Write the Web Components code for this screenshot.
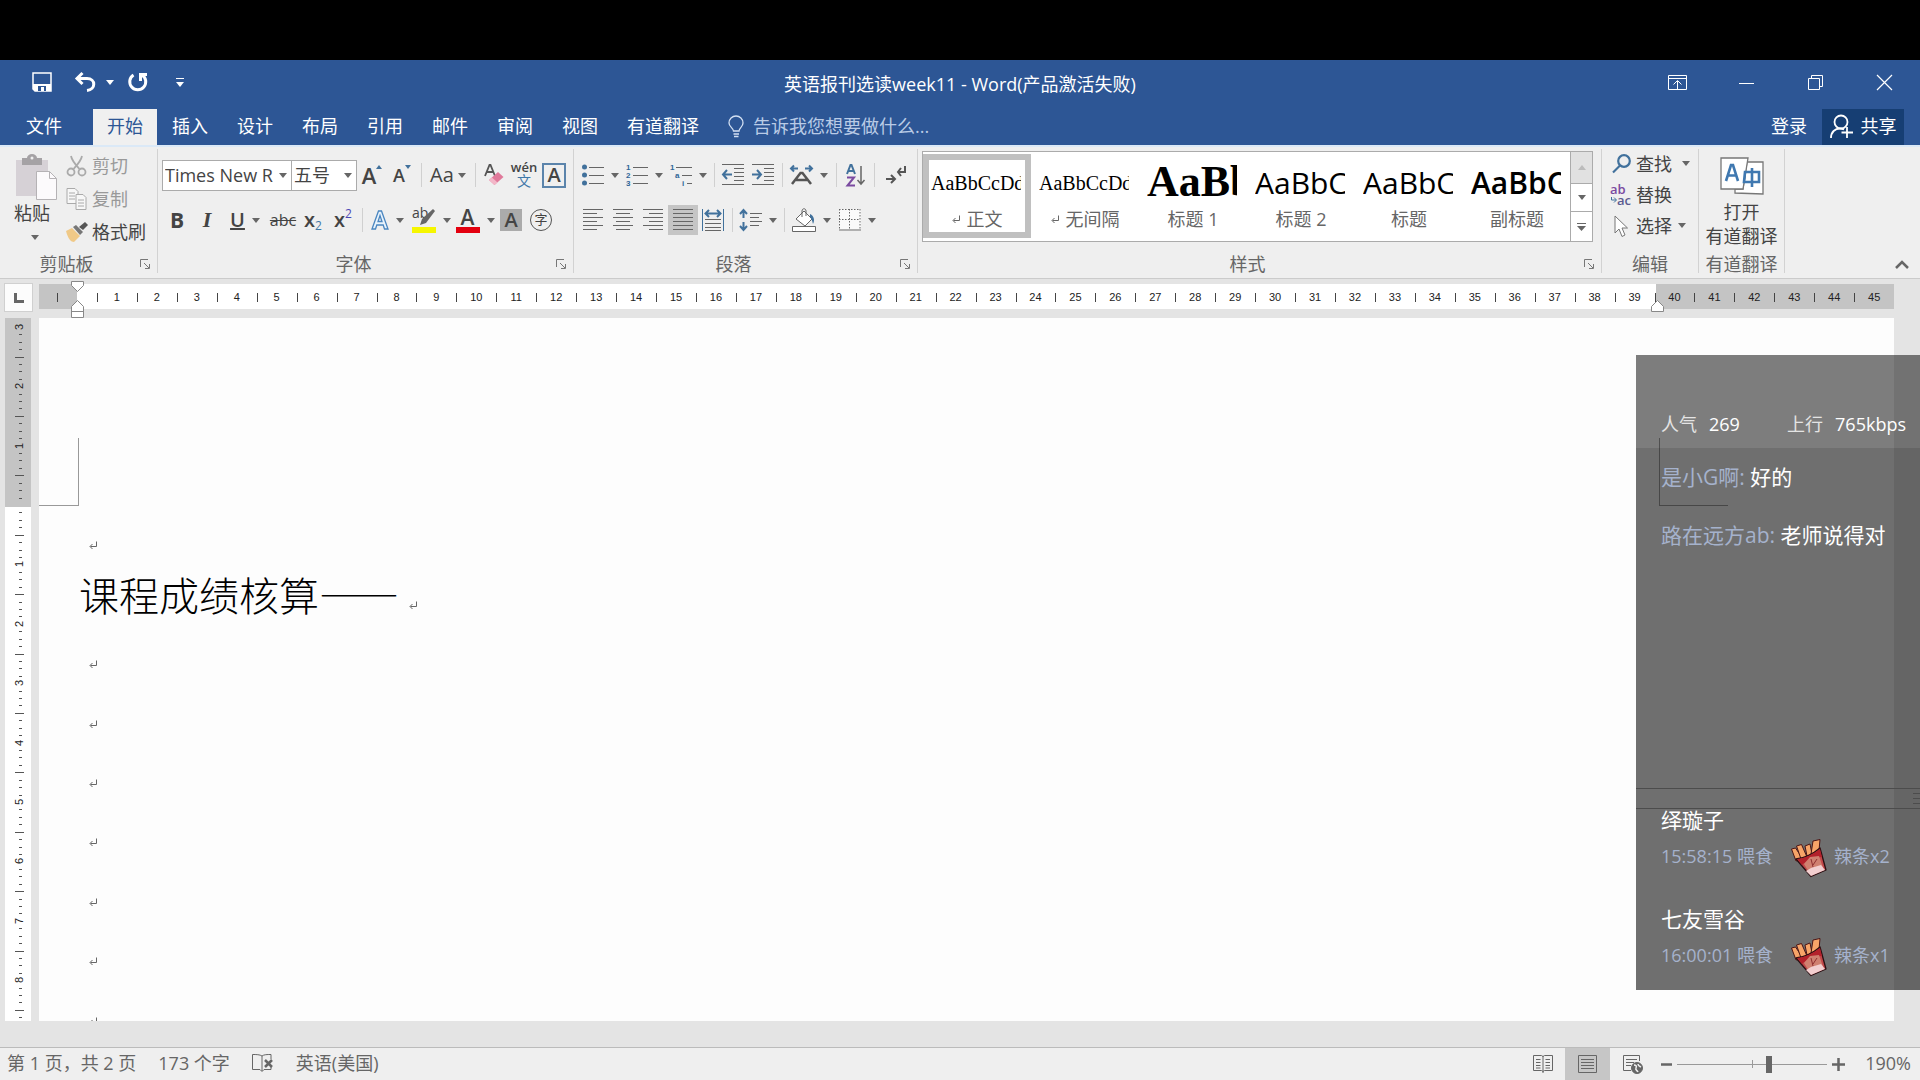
<!DOCTYPE html>
<html lang="zh-CN">
<head>
<meta charset="utf-8">
<title>英语报刊选读week11 - Word</title>
<style>
html,body{margin:0;height:100%;background:#000}
body{font:18px/24px "Open Sans","Noto Sans CJK SC",sans-serif;color:#444}
</style>
</head>
<body>
<word-app></word-app>
<script>
const BASE = `
*,:host{box-sizing:border-box}
:host{display:block}
:host([hidden]){display:none}
button{font:inherit;color:inherit;background:none;border:0;padding:0;margin:0;display:flex;align-items:center;justify-content:center;white-space:nowrap}
a{color:inherit;text-decoration:none}
svg{display:block;flex:none;overflow:visible}
`;
function define(name, css, html, setup){
  const tpl = document.createElement('template');
  tpl.innerHTML = `<style>${BASE}${css}</style>${html}`;
  customElements.define(name, class extends HTMLElement{
    constructor(){
      super();
      this.attachShadow({mode:'open'}).append(tpl.content.cloneNode(true));
    }
    connectedCallback(){ if(setup) setup(this, this.shadowRoot); }
  });
}
const RET = '<svg width="9" height="9" viewBox="0 0 9 9" fill="none" stroke="#666"><path d="M7.500 0.500v5h-6M3.500 3l-2.500 2.500L3.500 8"/></svg>';

/* ---------- small parts ---------- */
define('caret-mark', `:host{width:8px;height:5px;flex:none;color:#666}`,
  `<svg width="8" height="5"><path d="M0 0h8L4 5z" fill="currentColor"/></svg>`);

define('tool-button', `
:host{width:30px;height:30px;flex:none}
:host([size="m"]){width:42px}
:host([size="l"]){width:44px}
:host([size="xl"]){width:46px}
button{width:100%;height:100%}
:host([drop]) button{gap:7px}
:host([on]) button{background:#c5c5c5}
caret-mark{display:none}
:host([drop]) caret-mark{display:block}
`, `<button type="button"><slot></slot><caret-mark></caret-mark></button>`, (h, r) => {
  r.querySelector('button').setAttribute('aria-label', h.getAttribute('label') || '');
});

define('tool-sep', `:host{width:8px;height:24px;flex:none;display:flex;justify-content:center}i{width:1px;background:#d0d0d0}`, `<i></i>`);

define('ribbon-group', `
:host{display:flex;flex-direction:column;flex:none;border-right:1px solid #d2d2d2;color:#444}
.body{flex:1;min-height:0}
footer{display:flex;height:19px;line-height:21px;color:#666}
.label{flex:1;text-align:center}
button{width:24px;display:none}
:host([launcher]) button{display:flex}
`, `<div class="body"><slot></slot></div><footer><span class="label"></span><button type="button" aria-label="更多"><svg width="10" height="10" fill="none" stroke="#777"><path d="M.5 8V.5H8M4 4l5 5M9.500 5v4.500H5"/></svg></button></footer>`,
(h, r) => { r.querySelector('.label').textContent = h.getAttribute('label'); });

/* ---------- title bar ---------- */
define('title-bar', `
:host{display:grid;grid-template-columns:1fr auto 1fr;height:49px;color:#fff;align-items:center}
.quick{display:flex;padding-left:26px;margin-top:-5px}
.quick button{width:32px;height:32px}
.quick .undo{width:56px;gap:10px;margin-left:8px}
.quick .more{margin-left:10px}
caret-mark{color:#fff}
h1{font:inherit;margin:0;padding-bottom:2px}
.win{display:flex;justify-content:flex-end;margin-top:-4px;padding-right:1px}
.win button{width:69px;height:36px}
`, `
<div class="quick">
<button type="button" aria-label="保存"><svg width="20" height="20" viewBox="0 0 20 20"><path d="M1 1h18v18H3l-2-2z" fill="none" stroke="#fff" stroke-width="1.500"/><path d="M1 12h18v7H3l-2-2z" fill="#fff"/><path d="M6 14h8v5h-2v-4h-3v4H6z" fill="#2d5695"/></svg></button>
<button type="button" class="undo" aria-label="撤消"><svg width="22" height="20" viewBox="0 0 22 20" fill="none" stroke="#fff" stroke-width="3"><path d="M8.500 1L3 6.500 8.500 12M3.500 6.500H13c9 0 9 11 0 12"/></svg><caret-mark></caret-mark></button>
<button type="button" aria-label="重复"><svg width="20" height="20" viewBox="0 0 20 20" fill="none" stroke="#fff" stroke-width="3"><path d="M5.500 3A8 8 0 1 0 14 3M12.500 9V2.500H19"/></svg></button>
<button type="button" class="more" aria-label="自定义"><svg width="8" height="9"><path d="M0 .5h8" stroke="#fff"/><path d="M0 4h8L4 9z" fill="#fff"/></svg></button>
</div>
<h1>英语报刊选读week11 - Word(产品激活失败)</h1>
<div class="win">
<button type="button" aria-label="功能区显示选项"><svg width="19" height="16" fill="none" stroke="#fff"><path d="M.5.500h18v14H.500zM.500 3.500h18M9.500 14V6M5.500 9.500l4-4 4 4"/></svg></button>
<button type="button" aria-label="最小化"><svg width="15" height="2"><path d="M0 1.500h15" stroke="#fff"/></svg></button>
<button type="button" aria-label="还原"><svg width="15" height="15" fill="none" stroke="#fff"><path d="M.5 3.500h11v11H.500zM3.500 3V.500h11v11H12"/></svg></button>
<button type="button" aria-label="关闭"><svg width="15" height="15" fill="none" stroke="#fff" stroke-width="1.200"><path d="M0 0l15 15M15 0L0 15"/></svg></button>
</div>`);

/* ---------- tabs ---------- */
define('ribbon-tabs', `
:host{display:flex;height:36px;color:#fff;padding-left:12px}
nav{display:flex;gap:1px}
nav button{padding:0 14px 2px;height:36px}
.file{margin-right:16px}
.on{background:#f0f0f0;color:#2d5695}
label{display:flex;align-items:center;gap:8px;margin-left:15px;color:#b9cbe6}
input{font:inherit;color:inherit;background:none;border:0;padding:0 0 2px;width:190px;outline:0}
input::placeholder{color:#b9cbe6;opacity:1}
.right{margin-left:auto;display:flex;gap:15px;padding-right:16px}
.right button{padding-bottom:2px}
.share{background:#163e73;width:82px;gap:8px;height:36px}
`, `
<nav></nav>
<label><svg width="17" height="22" viewBox="0 0 17 22" fill="none" stroke="#d3e0f3" stroke-width="1.300"><path d="M5.500 15c0-3-4.500-4-4.500-8a7 7 0 0 1 14 0c0 4-4 5-4 8zM5.500 18h5.500M6 20.500h4.500"/></svg><input type="text" aria-label="告诉我" placeholder="告诉我您想要做什么..."></label>
<div class="right"><button type="button">登录</button><button type="button" class="share"><svg width="23" height="25" viewBox="0 0 23 25" fill="none" stroke="#fff" stroke-width="1.800"><circle cx="11" cy="8" r="6.500"/><path d="M1 24c0-6 4-9.500 9-9.500 2 0 3 .5 4 1M17 13v11M11.500 18.500H23"/></svg>共享</button></div>`,
(h, r) => {
  r.querySelector('nav').innerHTML = ['文件','开始','插入','设计','布局','引用','邮件','审阅','视图','有道翻译']
    .map((t, i) => `<button type="button" class="${i === 0 ? 'file' : i === 1 ? 'on' : ''}">${t}</button>`).join('');
});

/* ---------- ribbon groups ---------- */
define('clipboard-tools', `
:host{display:flex;padding:0 0 0 14px}
.paste{flex-direction:column;width:45px;align-items:flex-start;justify-content:flex-start;padding-top:5px}
.paste span{margin-top:1px}
.paste caret-mark{margin:10px 0 0 17px}
.list{margin-left:6px}
.list button{height:33px;gap:4px;justify-content:flex-start}
.list svg{width:23px}
.off{color:#999}
`, `
<button type="button" class="paste"><svg width="43" height="46" viewBox="0 0 43 46"><path d="M2 6h32v36H2z" fill="#d6d1d6"/><path d="M8 4h5a5 4 0 0 1 10 0h5v7H8z" fill="#a5a2a5"/><circle cx="18" cy="4" r="1.500" fill="#efefef"/><path d="M22.500 17.500h13l7 7v21h-20z" fill="#fcfafc" stroke="#b5b2b5"/><path d="M35.500 17.500v7h7" fill="none" stroke="#b5b2b5"/></svg><span>粘贴</span><caret-mark></caret-mark></button>
<div class="list">
<button type="button" class="off"><svg width="20" height="22" viewBox="0 0 20 22" fill="none" stroke="#aaa" stroke-width="1.800"><path d="M4.500 1c1 5 4 8 8.500 13M15.500 1c-1 5-4 8-8.500 13"/><circle cx="4.500" cy="17" r="3.500"/><circle cx="15.500" cy="17" r="3.500"/></svg>剪切</button>
<button type="button" class="off"><svg width="22" height="22" viewBox="0 0 22 22" fill="#f7f7f7" stroke="#aaa"><path d="M1.500.500h8l3 3v12h-11zM3.500 5h6M3.500 8h6M3.500 11h6"/><path d="M10.500 6.500h7l3 3v12h-10zM12.500 12h6M12.500 15h6M12.500 18h6"/></svg>复制</button>
<button type="button"><svg width="23" height="20" viewBox="0 0 23 20"><path d="M1 9l6-3 8 8-6 6c-3 0-6-3-8-11z" fill="#f0c987"/><path d="M8 5l3-2 7 7-3 3z" fill="#777"/><path d="M14 5l6-5 3 3-5 5z" fill="#555"/></svg>格式刷</button>
</div>`);

define('font-tools', `
:host{padding:11px 0 0 4px;display:flex;flex-direction:column;gap:15px}
.row{display:flex;align-items:center;height:30px}
.combo{display:flex;align-items:center;position:relative;height:31px;background:#fff;border:1px solid #ababab;width:130px;margin-right:-1px}
.combo.s{width:66px;margin-right:0}
select{font:inherit;color:#444;appearance:none;border:0;background:none;padding:0 0 0 2px;margin:0;width:100%;height:28px;outline:0}
.combo caret-mark{position:absolute;right:4px;top:12px;width:8px}
b,i,u,s,span{line-height:30px}
.a{font-size:22px;font-weight:600;line-height:30px}
.sub{font-size:12px;line-height:14px;color:#3f78a8;align-self:flex-end;font-weight:400}
.sup{align-self:flex-start;color:#4b47b5}
.x{display:flex;font-weight:600;font-size:20px;line-height:26px}
.bar{display:flex;flex-direction:column;width:24px;align-items:center}
.bar>em{height:6px;width:24px;background:#e3000f}
.bar>span{font-size:21px;line-height:20px;font-weight:600}
.wen{display:flex;flex-direction:column;align-items:center;font-size:13px;font-weight:600}
.wen span{line-height:11px}
.wen span+span{color:#3f78a8;line-height:15px;font-size:14px;font-weight:400}
.box{border:2px solid #5b84ab;width:24px;height:25px;line-height:20px;font-size:20px;font-weight:600;text-align:center}
.shade{background:#ababab;width:22px;height:22px;line-height:22px;font-size:20px;font-weight:600;text-align:center}
.ring{border:1px solid #555;border-radius:50%;width:22px;height:22px;font-size:13px;line-height:19px;text-align:center}
`, `
<div class="row">
<label class="combo"><select aria-label="字体"><option>Times New R</option></select><caret-mark></caret-mark></label>
<label class="combo s"><select aria-label="字号"><option>五号</option></select><caret-mark></caret-mark></label>
<tool-button label="增大字号"><span class="a">A</span><svg width="6" height="20"><path d="M0 4h6L3 0z" fill="#41719c"/></svg></tool-button>
<tool-button label="减小字号"><span style="font-weight:600">A</span><svg width="6" height="20"><path d="M0 0h6L3 4z" fill="#41719c"/></svg></tool-button>
<tool-sep></tool-sep>
<tool-button size="xl" drop label="更改大小写"><span style="font-size:20px;margin-right:-3px">Aa</span></tool-button>
<tool-sep></tool-sep>
<tool-button label="清除格式"><svg width="20" height="22" viewBox="0 0 20 22"><path d="M1 12L5.500 1h1L11 12M2.500 8h7" fill="none" stroke="#555" stroke-width="1.800"/><path d="M5 16l9-8 5.500 5-9 8z" fill="#e0799a"/><path d="M5 16l3-2.500 5.500 5-3 2.500z" fill="#f3b7c8"/></svg></tool-button>
<tool-button label="拼音指南"><div class="wen"><span>wén</span><span>文</span></div></tool-button>
<tool-button label="字符边框"><div class="box">A</div></tool-button>
</div>
<div class="row">
<tool-button label="加粗"><b style="font-size:21px">B</b></tool-button>
<tool-button label="倾斜"><i style="font:italic bold 22px/30px 'Liberation Serif',serif">I</i></tool-button>
<tool-button size="xl" drop label="下划线"><u style="font-size:20px;font-weight:600">U</u></tool-button>
<tool-button label="删除线"><s style="font-size:16px">abc</s></tool-button>
<tool-button label="下标"><div class="x">x<span class="sub">2</span></div></tool-button>
<tool-button label="上标"><div class="x">x<span class="sub sup">2</span></div></tool-button>
<tool-sep></tool-sep>
<tool-button size="m" drop label="文本效果"><svg width="18" height="20" viewBox="0 0 18 20"><path d="M1 19L7.500 1h3L17 19h-3.500l-1.300-4H5.800l-1.300 4zM7 11.500h4L9 5.500z" fill="#e8f3fc" stroke="#4a86c0" stroke-width="1.300"/></svg></tool-button>
<tool-button size="xl" drop label="突出显示"><div class="bar"><svg width="24" height="20" viewBox="0 0 24 20"><text x="0" y="11" font-size="14" fill="#444">ab</text><path d="M10 12L21 2l2 2-9 12-6 2z" fill="#666"/></svg><em style="background:#f6f600"></em></div></tool-button>
<tool-button size="m" drop label="字体颜色"><div class="bar"><span>A</span><em></em></div></tool-button>
<tool-button label="字符底纹"><div class="shade">A</div></tool-button>
<tool-button label="带圈字符"><div class="ring">字</div></tool-button>
</div>`);

define('paragraph-tools', `
:host{padding:11px 0 0 4px;display:flex;flex-direction:column;gap:15px}
.row{display:flex;align-items:center;height:30px}
svg{fill:none;stroke:#666}
.b{fill:#41719c;stroke:none}.bs{stroke:#41719c;stroke-width:2}
text{stroke:none;font:bold 8px "Liberation Sans",sans-serif;fill:#2f6597}
`, `
<div class="row">
<tool-button size="l" drop label="项目符号"><svg width="22" height="22"><g class="b"><circle cx="2.500" cy="3" r="2.500"/><circle cx="2.500" cy="11" r="2.500"/><circle cx="2.500" cy="19" r="2.500"/></g><path d="M7 3.500h15M7 11.500h15M7 19.500h15"/></svg></tool-button>
<tool-button size="l" drop label="编号"><svg width="22" height="22"><text x="0" y="6">1</text><text x="0" y="14">2</text><text x="0" y="22">3</text><path d="M7 3.500h15M7 11.500h15M7 19.500h15"/></svg></tool-button>
<tool-button size="l" drop label="多级列表"><svg width="22" height="22"><text x="0" y="6">1</text><text x="5" y="14">a</text><text x="12" y="22">i</text><path d="M6 3.500h16M12 11.500h10M17 19.500h5"/></svg></tool-button>
<tool-sep></tool-sep>
<tool-button label="减少缩进"><svg width="22" height="22"><path d="M0 .500h22M12 4.500h10M12 8.500h10M12 12.500h10M12 16.500h10M0 20.500h22"/><path class="bs" d="M10 10.500H1M5 6l-4 4.500L5 15"/></svg></tool-button>
<tool-button label="增加缩进"><svg width="22" height="22"><path d="M0 .500h22M12 4.500h10M12 8.500h10M12 12.500h10M12 16.500h10M0 20.500h22"/><path class="bs" d="M0 10.500h9M5 6l4 4.500L5 15"/></svg></tool-button>
<tool-sep></tool-sep>
<tool-button size="xl" drop label="中文版式"><svg width="23" height="20"><path class="bs" d="M8 3.500H1M4 .500l-3 3 3 3M15 3.500h7M19 .500l3 3-3 3"/><path d="M2 19L10.500 8h2L21 19M6 15h11" stroke-width="2.500" stroke="#555"/></svg></tool-button>
<tool-sep></tool-sep>
<tool-button label="排序"><svg width="19" height="23"><path d="M1 10L4.500 1h1L9 10M2.500 7h5" stroke="#41719c" stroke-width="2"/><path d="M1 13.500h7L1.500 21.500H9" stroke="#7a4aa0" stroke-width="2"/><path d="M15 2v18M11.500 16l3.500 4 3.500-4" stroke-width="1.500"/></svg></tool-button>
<tool-sep></tool-sep>
<tool-button label="编辑标记"><svg width="15" height="20" stroke-width="2"><path d="M19 1v6h-7M15 3l-3 4 3 4M0 14h9M5 10l4 4-4 4" stroke="#555"/></svg></tool-button>
</div>
<div class="row">
<tool-button label="左对齐"><svg width="20" height="22"><path d="M0 .500h20M0 4.500h14M0 8.500h20M0 12.500h14M0 16.500h20M0 20.500h14"/></svg></tool-button>
<tool-button label="居中"><svg width="20" height="22"><path d="M0 .500h20M3 4.500h14M0 8.500h20M3 12.500h14M0 16.500h20M3 20.500h14"/></svg></tool-button>
<tool-button label="右对齐"><svg width="20" height="22"><path d="M0 .500h20M6 4.500h14M0 8.500h20M6 12.500h14M0 16.500h20M6 20.500h14"/></svg></tool-button>
<tool-button on label="两端对齐"><svg width="20" height="22"><path d="M0 .500h20M0 4.500h20M0 8.500h20M0 12.500h20M0 16.500h20M0 20.500h20"/></svg></tool-button>
<tool-button label="分散对齐"><svg width="22" height="22"><path d="M.500 0v22M21.500 0v22" stroke="#41719c"/><path class="bs" d="M4 4.500h14M7 1L3.500 4.500 7 8M15 1l3.500 3.500L15 8"/><path d="M3 10.500h16M3 14.500h16M3 18.500h16M3 21.500h16"/></svg></tool-button>
<tool-sep></tool-sep>
<tool-button size="l" drop label="行距"><svg width="23" height="22"><path class="bs" d="M4.500 1v8M1 5l3.500-4L8 5M4.500 13v8M1 17l3.500 4L8 17"/><path d="M11 4.500h12M11 8.500h9M11 12.500h12M11 16.500h9"/></svg></tool-button>
<tool-sep></tool-sep>
<tool-button size="xl" drop label="底纹"><svg width="24" height="24"><path d="M4 11l8-8 8 8-7 7z" fill="#fff"/><path d="M10 9V3c0-3 4-3 4 0v5"/><path d="M18 6c4 2 5 6 3 10-1-4-2-6-3-7z" class="b"/><path d="M.500 18.500h23v5H.500z" fill="#fff"/></svg></tool-button>
<tool-button size="xl" drop label="边框"><svg width="22" height="22"><path d="M0 0h22v22H0z" fill="#fafafa" stroke="none"/><path d="M.500 0v21M21 0v21M0 .500h21M0 10.500h21M10.500 0v21" stroke-dasharray="1.500 1.500"/><path d="M0 21h22"/></svg></tool-button>
</div>`);

define('style-card', `
:host{width:108px;flex:none;height:84px;margin-top:2px;padding:0 2px;border:6px solid transparent;display:flex;flex-direction:column}
:host([on]){border-color:#c0c0c0}
.sample{height:48px;overflow:hidden;white-space:nowrap;color:#000;font:20px/46px "Liberation Serif",serif;width:90px}
.name{display:flex;justify-content:center;align-items:center;gap:6px;line-height:22px;color:#666;white-space:nowrap}
.name svg{display:none}
:host([mark]) .name svg{display:block}
:host([kind="h1"]) .sample{font:bold 44px/43px "Liberation Serif",serif}
:host([kind="h2"]) .sample{font:400 30px/46px "Open Sans",sans-serif}
:host([kind="sub"]) .sample{font:600 30px/46px "Open Sans",sans-serif}
`, `<div class="sample"><slot></slot></div><div class="name">${RET}<span></span></div>`,
(h, r) => { r.querySelector('span').textContent = h.getAttribute('label'); });

define('style-gallery', `
:host{padding:2px 8px 0 4px}
.g{display:flex;height:91px;border:1px solid #ababab;background:#fff}
.cards{display:flex;flex:1;overflow:hidden}
.scroll{width:22px;border-left:1px solid #ababab;display:grid;grid-template-rows:31px 28px 1fr}
.scroll button+button{border-top:1px solid #ababab}
.scroll button:first-child{background:#e1e1e1}
`, `<div class="g"><div class="cards">
<style-card on mark label="正文">AaBbCcDd</style-card>
<style-card mark label="无间隔">AaBbCcDd</style-card>
<style-card kind="h1" label="标题 1">AaBb</style-card>
<style-card kind="h2" label="标题 2">AaBbC</style-card>
<style-card kind="h2" label="标题">AaBbC</style-card>
<style-card kind="sub" label="副标题">AaBbC</style-card>
</div><div class="scroll">
<button type="button" aria-label="上"><svg width="8" height="5"><path d="M0 5h8L4 0z" fill="#bbb"/></svg></button>
<button type="button" aria-label="下"><caret-mark></caret-mark></button>
<button type="button" aria-label="展开"><svg width="9" height="8"><path d="M0 .500h9" stroke="#666"/><path d="M0 3h9L4.500 8z" fill="#666"/></svg></button>
</div></div>`);

define('edit-tools', `
:host{padding-left:8px}
button{height:31px;gap:4px;padding-bottom:2px}
.i{width:22px;display:flex;justify-content:center}
caret-mark{margin-left:2px}
text{font:600 13px "Open Sans",sans-serif}
`, `
<button type="button"><span class="i"><svg width="19" height="19" fill="none" stroke="#41719c" stroke-width="2.200"><circle cx="12" cy="7" r="5.800"/><path d="M8 11.500L1 18.500"/></svg></span>查找<caret-mark style="margin-left:6px"></caret-mark></button>
<button type="button"><span class="i"><svg width="22" height="22"><text x="0" y="10" fill="#7a4aa0">ab</text><text x="7" y="21" fill="#5b5b8f">ac</text><path d="M1.500 13v3H6M4 13.500l2.500 2.500L4 18.500" fill="none" stroke="#41719c"/></svg></span>替换</button>
<button type="button"><span class="i"><svg width="14" height="22" fill="#fff" stroke="#777"><path d="M1 1v17l4-4 3 7.500 3-1.500-3-7h5.500z"/></svg></span>选择<caret-mark></caret-mark></button>`);

define('youdao-tool', `
:host{padding-top:8px}
button{flex-direction:column;width:100%}
span{line-height:24px}
svg{margin-bottom:5px}
`, `<button type="button"><svg width="46" height="38" viewBox="0 0 46 38" stroke="#777" stroke-width="1.300"><path d="M28 5h16v32l-28-1v-4h8z" fill="#fff"/><path d="M2 1h27l-5 31H2z" fill="#fff"/><path d="M7 24l5-16h2l5 16M9 18.500h8" fill="none" stroke="#3f78b0" stroke-width="2.600"/><path d="M26 15h14v10H25zM33 11v19" fill="none" stroke="#3f78b0" stroke-width="2.600"/></svg><span>打开</span><span>有道翻译</span></button>`);

define('ribbon-bar', `
:host{display:flex;flex:none;height:134px;background:#efefef;border-top:2px solid #dbe9f7;border-bottom:1px solid #cbcbcb;padding:2px 0 5px}
.clip{width:158px}.font{width:416px}.para{width:344px}.style{width:684px}.edit{width:97px}.yd{width:86px}
.fold{margin-left:auto;align-self:flex-end;width:36px;height:17px}
`, `
<ribbon-group class="clip" launcher label="剪贴板"><clipboard-tools></clipboard-tools></ribbon-group>
<ribbon-group class="font" launcher label="字体"><font-tools></font-tools></ribbon-group>
<ribbon-group class="para" launcher label="段落"><paragraph-tools></paragraph-tools></ribbon-group>
<ribbon-group class="style" launcher label="样式"><style-gallery></style-gallery></ribbon-group>
<ribbon-group class="edit" label="编辑"><edit-tools></edit-tools></ribbon-group>
<ribbon-group class="yd" label="有道翻译"><youdao-tool></youdao-tool></ribbon-group>
<button type="button" class="fold" aria-label="折叠功能区"><svg width="14" height="9" fill="none" stroke="#666" stroke-width="2.500"><path d="M1 8l6-6 6 6"/></svg></button>`);

/* ---------- rulers and page ---------- */
define('tab-corner', `
:host{margin:4px 6px 6px 4px;background:#fcfcfc;border:1px solid #d0d0d0;display:flex;align-items:center;justify-content:center}
`, `<svg width="10" height="10"><path d="M1.500 0v8.500H10" fill="none" stroke="#666" stroke-width="3"/></svg>`);

define('h-ruler', `
:host{position:relative}
.bar{margin-top:5px;height:25px;display:flex;padding-left:18px;background:linear-gradient(90deg,#c4c4c4 38px,#fff 38px,#fff calc(100% - 238px),#c4c4c4 calc(100% - 238px))}
.bar span{flex:1;min-width:0;position:relative;text-align:center;font:11px/27px "Liberation Sans",sans-serif;color:#222}
.bar span::before{content:"";position:absolute;left:0;top:9px;width:1px;height:9px;background:#444}
.m{position:absolute;fill:#fff;stroke:#888}
.l{left:32px;top:2px}.r{right:230px;top:21px}
`, `<div class="bar"></div>
<svg class="m l" width="13" height="37"><path d="M.500.500h12v4l-6 6-6-6zM.500 36.500h12v-11l-6-6-6 6zM.500 30.500h12"/></svg>
<svg class="m r" width="13" height="12"><path d="M.500 11.500h12v-5l-6-6-6 6z"/></svg>`,
(h, r) => {
  let s = '<span></span>';
  for (let n = 1; n <= 45; n++) s += `<span>${n}</span>`;
  r.querySelector('.bar').innerHTML = s;
});

define('v-ruler', `
:host{margin:0 8px 0 5px;overflow:hidden;background:linear-gradient(#c4c4c4 189px,#fff 189px);contain:size}
text{font:11px "Liberation Sans",sans-serif;fill:#222;text-anchor:middle}
path{stroke:#555;fill:none}
`, `<svg width="26" height="703"></svg>`,
(h, r) => {
  const zero = 187, unit = 59.4;
  let d = '', t = '';
  for (let k = -25; k <= 70; k++) {
    const y = Math.round(zero + k * unit / 8);
    if (k === 0 || y < 2 || y > 702) continue;
    if (k % 8 === 0) t += `<text transform="translate(18 ${y}) rotate(-90)">${Math.abs(k / 8)}</text>`;
    else d += k % 4 === 0 ? `M10 ${y}.5h9` : `M14 ${y}.5h3`;
  }
  r.querySelector('svg').innerHTML = `<path d="${d}"/>${t}`;
});

define('doc-page', `
:host{background:#fdfdfd;position:relative;overflow:hidden;contain:size;padding-top:198px}
.corner{position:absolute;top:120px;height:68px;border-bottom:1px solid #999}
.tl{left:0;width:40px;border-right:1px solid #999}
.tr{right:166px;width:69px;border-left:1px solid #999}
.lines{display:flex;flex-direction:column;height:535px}
p{flex:1;margin:0;padding-left:41px;display:flex;align-items:center;color:#000;font:300 40px/38px "Noto Sans CJK SC",sans-serif}
p span{align-self:flex-start;margin-right:10px}
p svg{margin-left:9px}
.t{padding-left:40px}
.t svg{margin-left:0}
`, `<i class="corner tl"></i><i class="corner tr"></i><div class="lines"></div>`,
(h, r) => {
  r.querySelector('.lines').innerHTML = Array.from({length: 9}, (_, i) =>
    i === 1 ? `<p class="t"><span>课程成绩核算——</span>${RET}</p>` : `<p>${RET}</p>`).join('');
});

define('work-area', `
:host{flex:1;display:grid;grid-template-columns:39px 1fr;grid-template-rows:39px 1fr;padding:0 26px 26px 0;background:#e4e4e4;min-height:0}
`, `<tab-corner></tab-corner><h-ruler></h-ruler><v-ruler></v-ruler><doc-page></doc-page>`);

/* ---------- status bar ---------- */
define('status-bar', `
:host{display:flex;flex:none;align-items:center;height:33px;background:#efefef;border-top:1px solid #bbb;color:#666;padding:0 9px 0 7px}
.left{display:flex;gap:22px;align-items:center;padding-bottom:2px}
.right{margin-left:auto;display:flex;align-items:center}
.view{width:45px;height:32px}
.on{background:#c6c6c6}
svg{fill:none;stroke:#666}
.step{width:22px;height:32px}
input{appearance:none;width:150px;height:20px;margin:0;background:linear-gradient(#999,#999) center/100% 1px no-repeat,linear-gradient(#999,#999) center/1px 8px no-repeat}
input::-webkit-slider-thumb{appearance:none;width:6px;height:17px;background:#666}
output{width:62px;text-align:right;padding-bottom:2px}
`, `
<div class="left"><span>第 1 页，共 2 页</span><span>173 个字</span>
<svg width="22" height="18" viewBox="0 0 22 18"><path d="M10 2C8 .500 4 .500 .500 .500v15H8l2 2 2-2h7V13M10 2v15M10 2C12 .500 15 .500 19 .500V5"/><path d="M13 6l7 7M20 6l-7 7" stroke-width="2.500"/></svg>
<span>英语(美国)</span></div>
<div class="right">
<button type="button" class="view" aria-label="阅读视图"><svg width="20" height="18"><path d="M.500.500h8l1.500 1 1.500-1h8v15h-8l-1.500 1-1.500-1h-8zM10 1v17M3 4.500h4.500M3 7.500h4.500M3 10.500h4.500M3 13h4.500M12.500 4.500H17M12.500 7.500H17M12.500 10.500H17M12.500 13H17"/></svg></button>
<button type="button" class="view on" aria-label="页面视图"><svg width="19" height="18"><path d="M.500.500h18v17H.500zM3 4.500h13M3 7.500h13M3 10.500h13M3 13.500h13"/></svg></button>
<button type="button" class="view" aria-label="Web 版式"><svg width="20" height="19"><path d="M8 15.500H.500V.500h16V6M3 4.500h11M3 7.500h8M3 10.500h5"/><circle cx="14" cy="13" r="5.500" fill="#666"/><path d="M11 10c2 0 3 1 2 3s1 2 2 4M15 9c0 2 1 2 3 3" stroke="#efefef" stroke-width="1.500"/></svg></button>
<button type="button" class="step" aria-label="缩小"><svg width="11" height="3"><path d="M0 1.500h11" stroke-width="2.500"/></svg></button>
<input type="range" min="0" max="100" value="62" aria-label="缩放">
<button type="button" class="step" aria-label="放大"><svg width="13" height="13"><path d="M0 6.500h13M6.500 0v13" stroke-width="2.500"/></svg></button>
<output>190%</output>
</div>`);

/* ---------- live chat overlay ---------- */
define('gift-row', `
:host{display:flex;flex-direction:column;gap:6px}
.who{font-size:21px;line-height:22px;color:#fff;height:24px}
.what{display:grid;grid-template-columns:130px 43px auto;align-items:center;height:37px;color:#a5b2cc;white-space:nowrap;line-height:34px}
.what svg{align-self:start}
::slotted([slot="time"]),::slotted([slot="count"]){align-self:start}
`, `<div class="who"><slot name="who"></slot></div>
<div class="what"><slot name="time"></slot>
<svg width="36" height="38" viewBox="0 0 36 38" stroke-linejoin="round"><g fill="#f7a468" stroke="#4b1515"><path d="M5 22L.500 10l4-1L12 20z"/><path d="M10 20L5.500 7l5-1.500L16 18z"/><path d="M16 17l-2-10 5-2 2 10z"/><path d="M20 15L22 2l7-1.500-1 11z"/></g><path d="M5 20c9-1 17-5 24-11l6 22-15 6.500z" fill="#c2484a" stroke="#2b0f12" stroke-width="1.300"/><path d="M6 20c9-1 16-5 23-10l2 8c-8 0-15 3-20 8z" fill="#b3212b"/><path d="M13 25l6-7 9-1 4 12-13 6z" fill="#d08070"/><path d="M15 32l5-3 10-3 4 5-14 6z" fill="#f3cfd0"/><path d="M20 20l2 8M26 20l-4 6" stroke="#8f2f30" fill="none"/></svg>
<slot name="count"></slot></div>`);

define('live-overlay', `
:host{position:absolute;right:0;top:355px;width:284px;height:635px;display:flex;flex-direction:column;color:#fff}
header{height:93px;background:rgba(16,16,16,.54);display:flex;align-items:flex-end;padding:0 14px 12px 25px;white-space:nowrap}
header span{color:#e4e4e4}
header b{font-weight:400;margin-left:12px}
header b+span{margin-left:auto}
main{flex:1;background:rgba(16,16,16,.6);padding:14px 0 0 25px;display:flex;flex-direction:column}
p{margin:0 0 28px;font-size:21px;line-height:30px;white-space:nowrap}
p span{color:#a5b2cc}
.grip{margin:auto 0 0 -25px;height:21px;border:solid #4c4c4c;border-width:1px 0;display:flex;justify-content:flex-end;align-items:center}
.gifts{height:181px;display:flex;flex-direction:column;gap:32px}
`, `<header><span>人气</span><b>269</b><span>上行</span><b>765kbps</b></header>
<main><p><span>是小G啊:</span> 好的</p><p><span>路在远方ab:</span> 老师说得对</p>
<div class="grip"><svg width="7" height="11" stroke="#4c4c4c"><path d="M0 .500h7M0 5.500h7M0 10.500h7"/></svg></div>
<div class="gifts">
<gift-row><span slot="who">绎璇子</span><span slot="time">15:58:15 喂食</span><span slot="count">辣条x2</span></gift-row>
<gift-row><span slot="who">七友雪谷</span><span slot="time">16:00:01 喂食</span><span slot="count">辣条x1</span></gift-row>
</div></main>`);

define('word-app', `
:host{display:flex;flex-direction:column;height:100vh;position:relative;overflow:hidden;padding-top:60px;background:#000}
.top{background:#2d5695;flex:none}
`, `<div class="top"><title-bar></title-bar><ribbon-tabs></ribbon-tabs></div><ribbon-bar></ribbon-bar><work-area></work-area><status-bar></status-bar><live-overlay></live-overlay>`);
</script>
</body>
</html>
